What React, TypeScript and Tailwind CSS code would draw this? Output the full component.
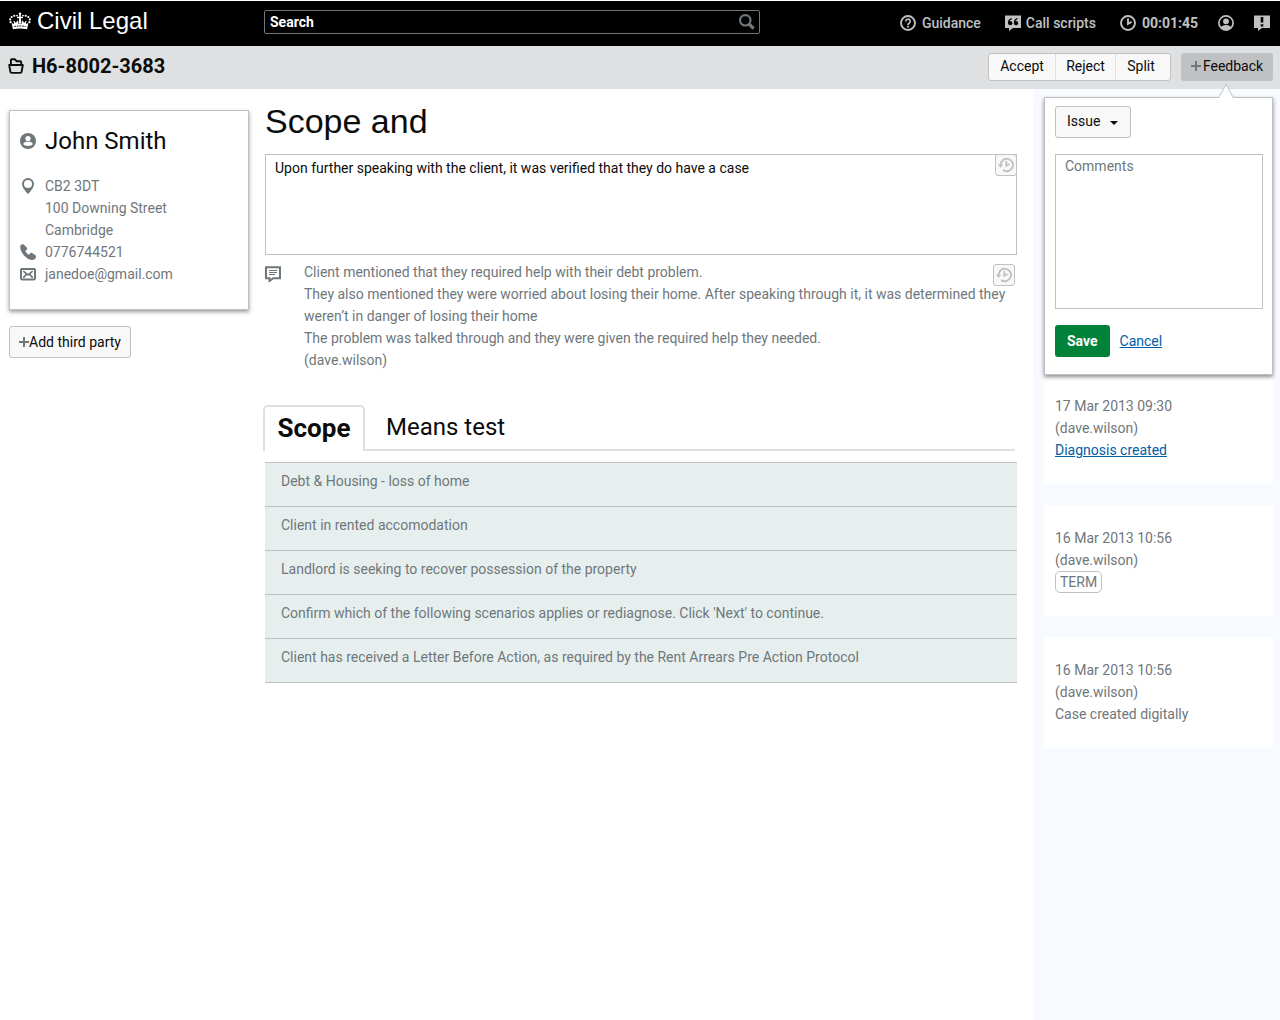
import type { ReactNode } from "react";

function Crown() {
  return (
    <svg className="h-[18px] w-[22px] shrink-0" viewBox="0 0 22 18" fill="none" aria-hidden="true">
      <g fill="#fff">
        <circle cx="11" cy="1.8" r="1.3" />
        <circle cx="8" cy="3.6" r="0.9" />
        <circle cx="14" cy="3.600" r="0.9" />
        <circle cx="5.300" cy="3.800" r="1.100" />
        <circle cx="16.700" cy="3.800" r="1.100" />
        <circle cx="2.700" cy="5" r="1.100" />
        <circle cx="19.300" cy="5" r="1.100" />
        <circle cx="1.200" cy="7.400" r="1.100" />
        <circle cx="20.800" cy="7.400" r="1.100" />
        <circle cx="1.600" cy="10.200" r="1.100" />
        <circle cx="20.400" cy="10.200" r="1.100" />
        <path d="M10.200 2.500h1.600v2.200h2.200v1.600h-2.200l.7 5.200h-3l.7-5.200H8V4.700h2.200z" />
        <path d="M2.600 11l2.400.9-.4-3.700 2.300 2.900 1.600-3 .8 3.600h3.400l.8-3.600 1.600 3 2.300-2.900-.4 3.700 2.400-.9-1.300 6.300c-4.700-1-9.500-1-14.200 0z" />
      </g>
      <path d="M5.300 14.500c3.700-.7 7.700-.7 11.400 0" stroke="#000" strokeWidth="0.900" strokeDasharray="1.800 0.800" />
    </svg>
  );
}

function Svg({ children, className }: { children: ReactNode; className: string }) {
  return (
    <svg className={className} viewBox="0 0 16 16" fill="none" stroke="currentColor" strokeWidth="2" aria-hidden="true">
      {children}
    </svg>
  );
}

const FolderIcon = () => (
  <Svg className="size-4 shrink-0">
    <path d="M2.900 7V2.200c0-.6.4-1 1-1h2.800l2 2h3.500c.600 0 1 .4 1 1V7" strokeWidth="1.900" />
    <path d="M1.200 7h13.600l-1.100 6.400c-.1.900-.6 1.500-1.500 1.500H3.800c-.9 0-1.400-.6-1.500-1.500z" strokeWidth="1.900" strokeLinejoin="round" />
  </Svg>
);

const SearchIcon = () => (
  <Svg className="size-4 text-[#6f777b]">
    <circle cx="6.300" cy="6.300" r="5.200" strokeWidth="2.200" />
    <path d="M10 10l4.700 4.700" strokeWidth="3.200" />
  </Svg>
);

const HelpIcon = () => (
  <Svg className="size-4">
    <circle cx="8" cy="8" r="7" strokeWidth="1.900" />
    <path d="M5.800 6.500a2.200 2.200 0 1 1 3.400 1.700c-.8.500-1.200.8-1.200 1.700" strokeWidth="1.700" />
    <path d="M8 10.800v1.700" strokeWidth="1.800" />
  </Svg>
);

const QuoteIcon = () => (
  <Svg className="size-4">
    <path d="M0 .5h16V13H8l-4 3v-3H0z" fill="currentColor" stroke="none" />
    <g stroke="none" fill="#000">
      <circle cx="5.200" cy="8.200" r="2.100" />
      <circle cx="11" cy="8.200" r="2.100" />
    </g>
    <path d="M3.700 8c-.1-2.200.9-3.800 3-4.300M9.500 8c-.1-2.200.9-3.800 3-4.300" stroke="#000" strokeWidth="1.300" />
  </Svg>
);

const ClockIcon = () => (
  <Svg className="size-4">
    <circle cx="8" cy="8" r="7" strokeWidth="1.900" />
    <path d="M8 3.500v5.300l3.600-1.900" strokeWidth="1.900" />
  </Svg>
);

const UserOutlineIcon = () => (
  <Svg className="size-4">
    <circle cx="8" cy="8" r="7.100" strokeWidth="1.700" />
    <circle cx="8" cy="6.300" r="2.900" fill="currentColor" stroke="none" />
    <path d="M2.800 13c.6-2.200 2.400-3 5.200-3s4.600.8 5.200 3c-1.400 1.400-3.200 2-5.200 2s-3.800-.6-5.200-2z" fill="currentColor" stroke="none" />
  </Svg>
);

const AlertIcon = () => (
  <Svg className="size-4">
    <path d="M0 .5h16V13H8l-4 3v-3H0z" fill="currentColor" stroke="none" />
    <path d="M8 2v5.500M8 9.200v2.200" stroke="#000" strokeWidth="2.600" />
  </Svg>
);

const UserIcon = () => (
  <Svg className="size-4">
    <circle cx="8" cy="8" r="8" fill="currentColor" stroke="none" />
    <circle cx="8" cy="5.500" r="2.600" fill="#fff" stroke="none" />
    <path d="M3.200 11.300c.3-2 2.200-2.600 4.800-2.600s4.500.6 4.800 2.600c-1 1.100-2.800 1.700-4.800 1.700s-3.800-.6-4.800-1.700z" fill="#fff" stroke="none" />
  </Svg>
);

const PinIcon = () => (
  <Svg className="size-4">
    <path d="M8 0a6 6 0 0 0-6 6c0 3 2 4.700 4 8l2 2 2-2c2-3.300 4-5 4-8a6 6 0 0 0-6-6zm0 2a4 4 0 1 1 0 8 4 4 0 0 1 0-8z" fill="currentColor" stroke="none" fillRule="evenodd" />
  </Svg>
);

const PhoneIcon = () => (
  <Svg className="size-4">
    <path d="M.2 3.200C0 1.200 1.500 0 3.200.2c.5.100.9.500 1.300 1l2.300 2.300c.5.600.5 1.300 0 1.900L5.300 7.100c.6 1.400 2 2.900 3.500 3.700l1.700-1.600c.6-.6 1.300-.6 1.900 0l2.500 1.500c.7.500 1.100 1 1.100 1.700.1 2-1.300 3.400-3.300 3.600C7 16.200.500 9 .2 3.200z" fill="currentColor" stroke="none" />
  </Svg>
);

const MailIcon = () => (
  <Svg className="size-4">
    <rect x="1" y="3" width="14" height="10.400" rx="0.800" />
    <path d="M3.300 5.200L8 9l4.700-3.800M3.300 11.600l3-3.200M12.700 11.600l-3-3.200" strokeWidth="1.700" />
  </Svg>
);

const NoteIcon = () => (
  <Svg className="size-4">
    <path d="M1 1.200h14v11H8.200L4.500 15v-2.800H1z" />
    <path d="M4 4.500h8M4 6.500h8M4 8.500h6" strokeWidth="1" />
  </Svg>
);

const HistoryIcon = () => (
  <Svg className="size-4">
    <path d="M2.600 8.500A6.200 6.200 0 1 1 5 12.900" strokeWidth="1.900" />
    <path d="M0 7.200h5.200L2.600 11z" fill="currentColor" stroke="none" />
    <path d="M8.300 4v4.800l3.300-1.800" strokeWidth="1.800" />
  </Svg>
);

const PlusIcon = () => (
  <svg className="size-[10px] shrink-0 text-[#6f777b]" viewBox="0 0 10 10" stroke="currentColor" strokeWidth="2" aria-hidden="true">
    <path d="M5 0v10M0 5h10" />
  </svg>
);

function HistoryButton({ label }: { label: string }) {
  return (
    <button type="button" aria-label={label} className="flex size-[22px] items-center justify-center rounded-[3px] border border-[#bfc1c3] bg-[#f8f8f8] text-[#bfc1c3]">
      <HistoryIcon />
    </button>
  );
}

const findings = [
  "Debt & Housing - loss of home",
  "Client in rented accomodation",
  "Landlord is seeking to recover possession of the property",
  "Confirm which of the following scenarios applies or rediagnose. Click 'Next' to continue.",
  "Client has received a Letter Before Action, as required by the Rent Arrears Pre Action Protocol",
];

function LogEntry({ date, children }: { date: string; children: ReactNode }) {
  return (
    <li className="min-h-[111px] bg-white px-[11px] pt-[22px]">
      <p>{date}</p>
      <p>(dave.wilson)</p>
      {children}
    </li>
  );
}

function FeedbackForm() {
  return (
    <form className="relative z-10 border border-[#bfc1c3] bg-white pt-2 pr-[9px] pb-[17px] pl-[10px] shadow-[0_2px_4px_rgba(0,0,0,0.45)]">
      <svg className="absolute -top-[14px] right-[38px] h-[15px] w-4" viewBox="0 0 16 15" aria-hidden="true">
        <path d="M0 15L8 0l8 15z" fill="#fff" />
        <path d="M.5 14L8 .5 15.500 14" fill="none" stroke="#bfc1c3" />
      </svg>
      <div className="relative w-[76px]">
        <select aria-label="Feedback type" className="block h-8 w-full appearance-none rounded-[3px] border border-[#bfc1c3] bg-[#f8f8f8] pr-5 pb-[2px] pl-[11px] text-sm text-[#0b0c0c]">
          <option>Issue</option>
        </select>
        <svg className="pointer-events-none absolute top-[15px] right-[13px] h-1 w-2" viewBox="0 0 8 4" aria-hidden="true">
          <path d="M0 0h8L4 4z" fill="#0b0c0c" />
        </svg>
      </div>
      <textarea aria-label="Comments" placeholder="Comments" className="mt-4 block h-[155px] w-full resize-none border border-[#bfc1c3] px-[9px] leading-[22px] placeholder:text-[#6f777b]" />
      <div className="mt-4 flex items-center gap-[10px]">
        <button type="button" className="h-8 rounded-[3px] bg-[#00823b] px-3 font-bold text-white">Save</button>
        <a href="#cancel" className="text-[#005ea5] underline">Cancel</a>
      </div>
    </form>
  );
}

export default function App() {
  return (
    <div className="flex min-h-screen flex-col bg-white pt-px font-[Roboto,sans-serif] text-sm leading-[22px] text-[#6f777b]">
      <header className="flex h-[45px] items-center bg-black pr-[10px] pb-[3px] text-[#bfc1c3]">
        <a href="#home" className="flex w-[264px] shrink-0 items-center gap-[6px] pb-[2px] pl-[9px] font-['Liberation_Sans',sans-serif] text-2xl text-white">
          <Crown />
          Civil Legal
        </a>
        <form role="search" className="mr-[140px] flex h-6 flex-1 items-center rounded-[2px] border border-[#6f777b] pr-1 pl-[5px]">
          <input type="search" aria-label="Search" placeholder="Search" className="min-w-0 flex-1 bg-transparent font-bold text-white placeholder:text-white" />
          <button type="button" aria-label="Submit search"><SearchIcon /></button>
        </form>
        <nav className="flex items-center pt-px font-medium">
          <a href="#guidance" className="mr-6 flex items-center gap-[6px]"><HelpIcon />Guidance</a>
          <a href="#scripts" className="mr-6 flex items-center gap-[5px]"><QuoteIcon />Call scripts</a>
          <span className="mr-5 flex items-center gap-[6px] font-bold"><ClockIcon />00:01:45</span>
          <a href="#account" aria-label="Account" className="mr-5"><UserOutlineIcon /></a>
          <a href="#alerts" aria-label="Alerts"><AlertIcon /></a>
        </nav>
      </header>

      <div className="flex h-[43px] items-center bg-[#dee0e2] px-[7px] pb-[2px] text-[#0b0c0c]">
        <h2 className="flex flex-1 items-center gap-2 pb-[2px] pl-px text-xl font-bold"><FolderIcon />H6-8002-3683</h2>
        <div className="mr-[10px] flex h-7 rounded-[3px] border border-[#bfc1c3] bg-[#f8f8f8]">
          <button type="button" className="w-[67px] border-r border-[#dee0e2] pb-px">Accept</button>
          <button type="button" className="w-[60px] border-r border-[#dee0e2] pb-px">Reject</button>
          <button type="button" className="w-[54px] pr-1 pb-px">Split</button>
        </div>
        <button type="button" className="flex h-7 w-[92px] items-center justify-center gap-[2px] rounded-[3px] bg-[#bfc1c3] pb-px"><PlusIcon />Feedback</button>
      </div>

      <div className="flex flex-1">
        <aside className="w-[249px] shrink-0 pt-[21px] pl-[9px]">
          <section className="border border-[#bfc1c3] px-[10px] pt-[14px] pb-6 shadow-[0_2px_4px_rgba(0,0,0,0.4)]">
            <h2 className="mb-[18px] flex items-center gap-[9px] text-2xl text-[#0b0c0c]">
              <span className="text-[#6f777b]"><UserIcon /></span>John Smith
            </h2>
            <address className="grid grid-cols-[16px_1fr] items-center gap-x-[9px] not-italic">
              <PinIcon /><span>CB2 3DT</span>
              <span className="col-start-2">100 Downing Street</span>
              <span className="col-start-2">Cambridge</span>
              <PhoneIcon /><span>0776744521</span>
              <MailIcon /><span>janedoe@gmail.com</span>
            </address>
          </section>
          <button type="button" className="mt-4 flex h-8 w-[122px] items-center justify-center rounded-[3px] border border-[#bfc1c3] bg-[#f8f8f8] text-[#0b0c0c]"><PlusIcon />Add third party</button>
        </aside>

        <main className="min-w-0 flex-1 px-4 pt-3">
          <h1 className="font-['Liberation_Sans',sans-serif] text-[34px] leading-10 text-[#0b0c0c]">Scope and</h1>
          <div className="relative mt-[13px]">
            <textarea aria-label="Case notes" defaultValue="Upon further speaking with the client, it was verified that they do have a case" className="block h-[101px] w-full resize-none border border-[#bfc1c3] py-[2px] pr-8 pl-[9px] leading-[22px] text-[#0b0c0c]" />
            <div className="absolute top-0 right-0"><HistoryButton label="Notes history" /></div>
          </div>
          <div className="relative mt-[6px] flex">
            <span className="mt-[5px] mr-[23px]"><NoteIcon /></span>
            <div className="min-w-0 flex-1">
              <p className="pr-8">Client mentioned that they required help with their debt problem.</p>
              <p>They also mentioned they were worried about losing their home. After speaking through it, it was determined they weren’t in danger of losing their home</p>
              <p>The problem was talked through and they were given the required help they needed.</p>
              <p>(dave.wilson)</p>
            </div>
            <div className="absolute top-[3px] right-[2px]"><HistoryButton label="Comment history" /></div>
          </div>

          <div role="tablist" className="mt-[34px] mr-[2px] -ml-[2px] flex h-[46px] text-[#0b0c0c]">
            <button type="button" role="tab" aria-selected="true" className="w-[102px] rounded-t-[5px] border-2 border-b-0 border-[#dee0e2] pb-[2px] text-[26px] font-bold">Scope</button>
            <div className="flex flex-1 border-b-2 border-[#dee0e2] pl-[21px]">
              <button type="button" role="tab" aria-selected="false" className="text-2xl">Means test</button>
            </div>
          </div>

          <ul className="mt-[11px] border-t border-[#bfc1c3]">
            {findings.map((text) => (
              <li key={text} className="min-h-11 border-b border-[#bfc1c3] bg-[#e7efee] px-4 pt-[7px]">{text}</li>
            ))}
          </ul>
        </main>

        <aside className="w-[247px] shrink-0 bg-[#f7fbff] pt-2 pr-[7px] pl-[11px]">
          <FeedbackForm />
          <ul className="-mt-[2px] flex flex-col gap-[21px]">
            <LogEntry date="17 Mar 2013 09:30"><a href="#diagnosis" className="text-[#005ea5] underline">Diagnosis created</a></LogEntry>
            <LogEntry date="16 Mar 2013 10:56"><span className="inline-block rounded-[5px] border border-[#bfc1c3] px-1 leading-5">TERM</span></LogEntry>
            <LogEntry date="16 Mar 2013 10:56"><p>Case created digitally</p></LogEntry>
          </ul>
        </aside>
      </div>
    </div>
  );
}
